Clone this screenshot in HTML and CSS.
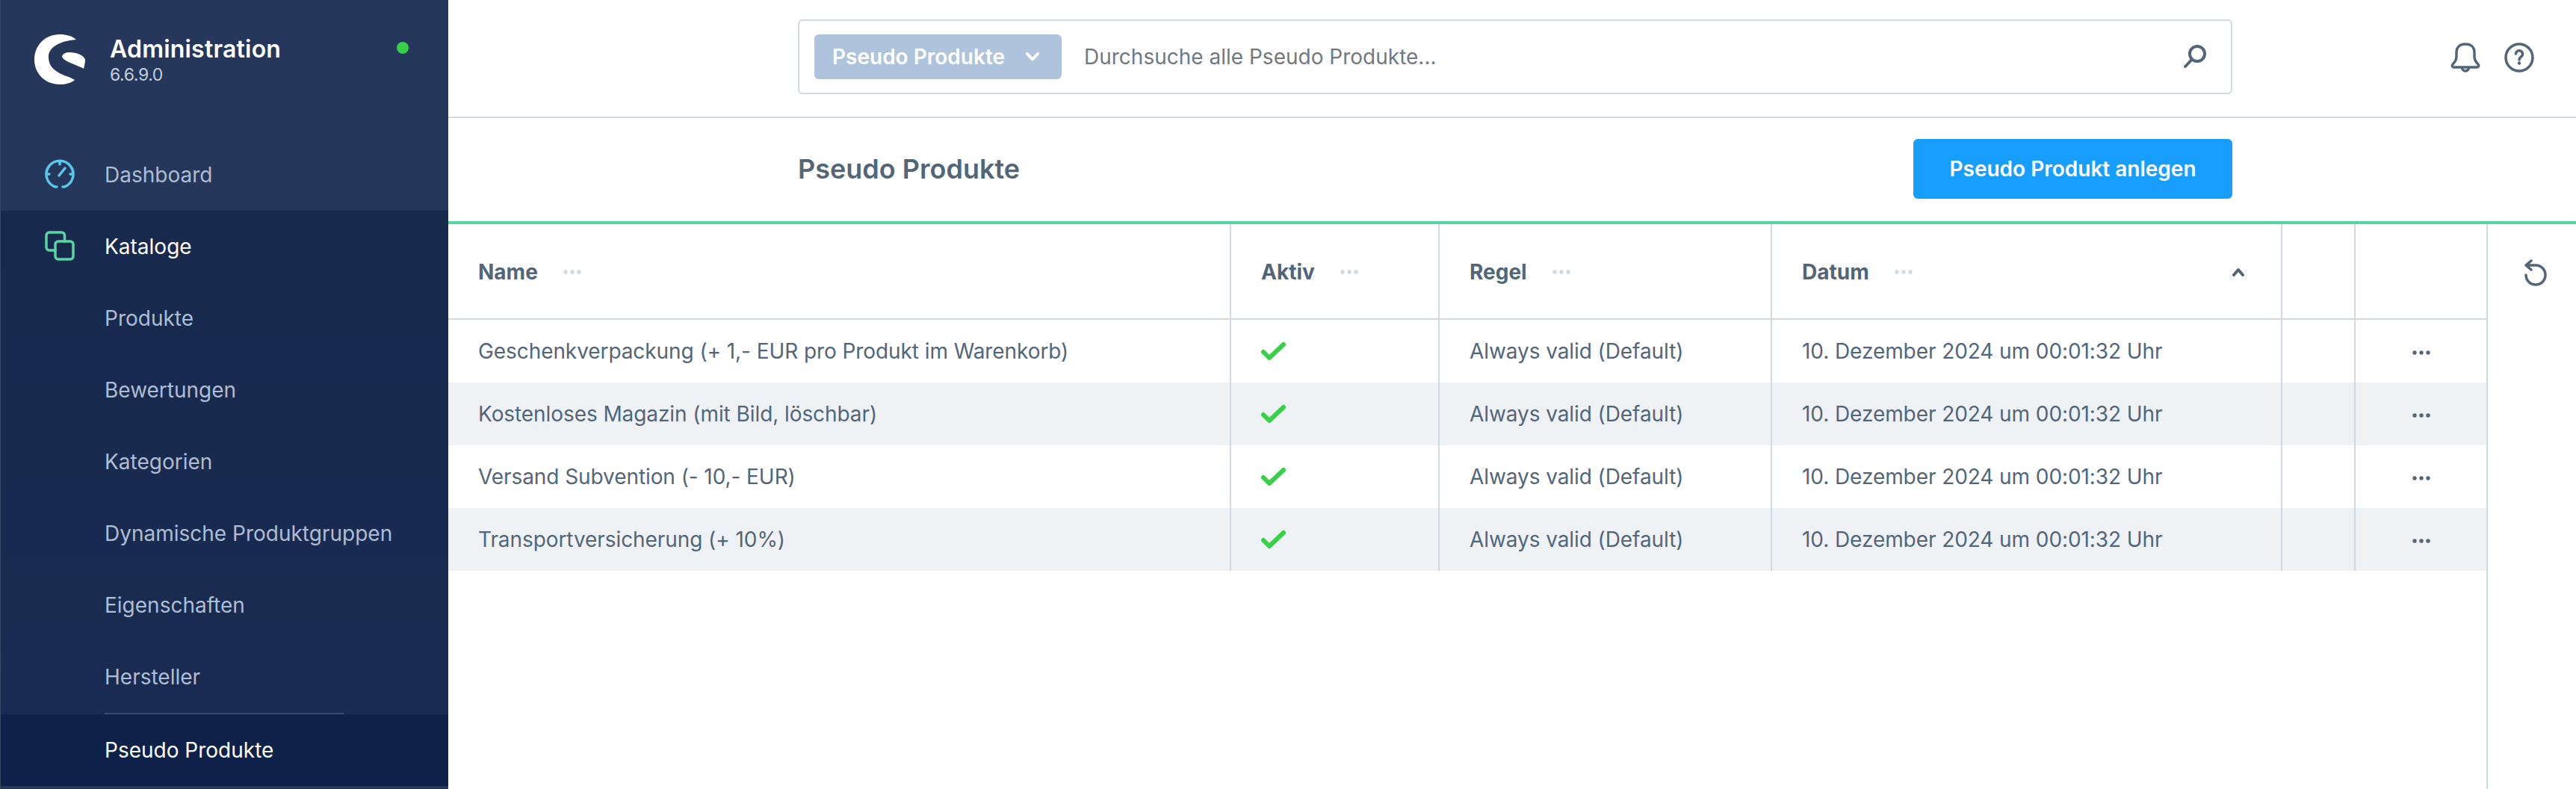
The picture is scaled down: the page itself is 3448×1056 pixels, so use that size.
FILE: index.html
```html
<!DOCTYPE html>
<html>
<head>
  <meta charset="UTF-8">
  <meta name="viewport" content="width=device-width, initial-scale=1.0">
  <title>Pseudo Produkte</title>
  <link rel="stylesheet" href="styles.css">
</head>
<body>
  <div class="app">
    <aside class="sidebar">
      <div class="brand">
        <svg class="logo" viewBox="0 0 68 68">
          <path d="M56 7C50 2 43 0 34 0C14 0 0 15 0 34C0 53 15 67 34 67C42 67 49 65 54 61C46 56 37 55 29 49C22 44 19 38 19 30C19 17 34 9 56 7Z" fill="#fff"/>
          <path d="M37 29C39 25 43 24 47 24C56 24 67 28 68 34C68 38 67 42 66 46C58 41 37 36 37 29Z" fill="#fff"/>
        </svg>
        <div class="brand-text">
          <div class="brand-name">Administration</div>
          <div class="brand-version">6.6.9.0</div>
        </div>
        <span class="status-dot"></span>
      </div>
      <nav class="nav">
        <a class="nav-item">
          <svg class="nav-icon icon-cyan" viewBox="0 0 40 40">
            <path d="M16 37H13.500A18 18 0 1 1 26.500 37H24M20 2V7M2 20H6M38 20H34M19 22L27 12"/>
          </svg>
          Dashboard
        </a>
        <div class="nav-group">
          <a class="nav-item nav-item-open">
            <svg class="nav-icon icon-green" viewBox="0 0 40 40">
              <rect x="14" y="14" width="24" height="24" rx="4"/>
              <path d="M26.500 14V6A4 4 0 0 0 22.500 2H6A4 4 0 0 0 2 6V22A4 4 0 0 0 6 26H14"/>
            </svg>
            Kataloge
          </a>
          <a class="nav-item">Produkte</a>
          <a class="nav-item">Bewertungen</a>
          <a class="nav-item">Kategorien</a>
          <a class="nav-item">Dynamische Produktgruppen</a>
          <a class="nav-item">Eigenschaften</a>
          <a class="nav-item">Hersteller</a>
          <div class="nav-divider"></div>
          <a class="nav-item nav-item-active">Pseudo Produkte</a>
        </div>
      </nav>
    </aside>

    <main class="main">
      <header class="topbar">
        <div class="search">
          <button class="search-type">
            Pseudo Produkte
            <svg class="search-chevron" viewBox="0 0 20 12"><path d="M3 2L10 9.500L17 2"/></svg>
          </button>
          <input class="search-input" type="text" placeholder="Durchsuche alle Pseudo Produkte...">
          <svg class="search-icon" viewBox="0 0 32 32">
            <circle cx="19" cy="12" r="10"/>
            <path d="M11.500 20L3 29"/>
          </svg>
        </div>
        <div class="top-actions">
          <svg class="top-icon" viewBox="0 0 40 40">
            <path d="M20 2C13 2 8 6 8 13V19C8 23 6 26 3 29C1.500 31 2.500 33 5 33H35C37.500 33 38.500 31 37 29C34 26 32 23 32 19V13C32 6 27 2 20 2ZM15.500 33A4.500 5 0 0 0 24.500 33"/>
          </svg>
          <svg class="top-icon" viewBox="0 0 40 40">
            <circle cx="20" cy="20" r="18"/>
            <path d="M15.500 15A4.500 4.500 0 1 1 22.500 19C21 20 20 21 20 23"/>
            <circle class="icon-fill" cx="20" cy="27.500" r="2.200"/>
          </svg>
        </div>
      </header>

      <div class="smartbar">
        <h1 class="page-title">Pseudo Produkte</h1>
        <button class="button">Pseudo Produkt anlegen</button>
      </div>

      <div class="content">
        <table class="grid">
          <thead>
            <tr>
              <th class="col-name"><div class="th-inner">Name <svg class="dots dots-light" viewBox="0 0 24 6"><circle cx="3" cy="3" r="2.700"/><circle cx="12" cy="3" r="2.700"/><circle cx="21" cy="3" r="2.700"/></svg></div></th>
              <th class="col-active"><div class="th-inner">Aktiv <svg class="dots dots-light" viewBox="0 0 24 6"><circle cx="3" cy="3" r="2.700"/><circle cx="12" cy="3" r="2.700"/><circle cx="21" cy="3" r="2.700"/></svg></div></th>
              <th class="col-rule"><div class="th-inner">Regel <svg class="dots dots-light" viewBox="0 0 24 6"><circle cx="3" cy="3" r="2.700"/><circle cx="12" cy="3" r="2.700"/><circle cx="21" cy="3" r="2.700"/></svg></div></th>
              <th class="col-date"><div class="th-inner">Datum <svg class="dots dots-light" viewBox="0 0 24 6"><circle cx="3" cy="3" r="2.700"/><circle cx="12" cy="3" r="2.700"/><circle cx="21" cy="3" r="2.700"/></svg>
                <svg class="sort-caret" viewBox="0 0 18 12"><path d="M3 10L9 3L15 10"/></svg></div></th>
              <th class="col-empty"></th>
              <th class="col-actions"></th>
            </tr>
          </thead>
          <tbody>
            <tr>
              <td>Geschenkverpackung (+ 1,- EUR pro Produkt im Warenkorb)</td>
              <td><svg class="check" viewBox="0 0 34 26"><path d="M3 14L11 22L30 4"/></svg></td>
              <td>Always valid (Default)</td>
              <td>10. Dezember 2024 um 00:01:32 Uhr</td>
              <td></td>
              <td class="cell-actions"><svg class="dots dots-dark" viewBox="0 0 24 6"><circle cx="3" cy="3" r="2.700"/><circle cx="12" cy="3" r="2.700"/><circle cx="21" cy="3" r="2.700"/></svg></td>
            </tr>
            <tr>
              <td>Kostenloses Magazin (mit Bild, löschbar)</td>
              <td><svg class="check" viewBox="0 0 34 26"><path d="M3 14L11 22L30 4"/></svg></td>
              <td>Always valid (Default)</td>
              <td>10. Dezember 2024 um 00:01:32 Uhr</td>
              <td></td>
              <td class="cell-actions"><svg class="dots dots-dark" viewBox="0 0 24 6"><circle cx="3" cy="3" r="2.700"/><circle cx="12" cy="3" r="2.700"/><circle cx="21" cy="3" r="2.700"/></svg></td>
            </tr>
            <tr>
              <td>Versand Subvention (- 10,- EUR)</td>
              <td><svg class="check" viewBox="0 0 34 26"><path d="M3 14L11 22L30 4"/></svg></td>
              <td>Always valid (Default)</td>
              <td>10. Dezember 2024 um 00:01:32 Uhr</td>
              <td></td>
              <td class="cell-actions"><svg class="dots dots-dark" viewBox="0 0 24 6"><circle cx="3" cy="3" r="2.700"/><circle cx="12" cy="3" r="2.700"/><circle cx="21" cy="3" r="2.700"/></svg></td>
            </tr>
            <tr>
              <td>Transportversicherung (+ 10%)</td>
              <td><svg class="check" viewBox="0 0 34 26"><path d="M3 14L11 22L30 4"/></svg></td>
              <td>Always valid (Default)</td>
              <td>10. Dezember 2024 um 00:01:32 Uhr</td>
              <td></td>
              <td class="cell-actions"><svg class="dots dots-dark" viewBox="0 0 24 6"><circle cx="3" cy="3" r="2.700"/><circle cx="12" cy="3" r="2.700"/><circle cx="21" cy="3" r="2.700"/></svg></td>
            </tr>
          </tbody>
        </table>
        <div class="grid-side">
          <svg class="reset-icon" viewBox="0 0 30 36"><path d="M9 2L2 8L9 14M2 8H15A13 13 0 1 1 2 21"/></svg>
        </div>
      </div>
    </main>
  </div>
</body>
</html>
```

FILE: styles.css
```css
* {
  box-sizing: border-box;
}
html, body {
  margin: 0;
  height: 100%;
  overflow: hidden;
}
body {
  font-family: Inter, "Noto Sans", sans-serif;
  font-size: 28px;
  color: #52667a;
  background: #fff;
}
.app {
  display: flex;
  height: 1056px;
}

/* sidebar */
.sidebar {
  width: 600px;
  flex: none;
  display: flex;
  flex-direction: column;
  background: #25375a;
  border-left: 1px solid #3a4a69;
}
.brand {
  height: 186px;
  padding: 46px 0 0 45px;
  display: flex;
  align-items: flex-start;
}
.logo {
  width: 68px;
  height: 68px;
  flex: none;
}
.brand-text {
  margin-left: 33px;
  width: 384px;
}
.brand-name {
  font-size: 32px;
  font-weight: 600;
  line-height: 40px;
  letter-spacing: 0.2px;
  color: #fff;
}
.brand-version {
  font-size: 23px;
  line-height: 28px;
  letter-spacing: -0.4px;
  color: #c4cfdc;
}
.status-dot {
  width: 16px;
  height: 16px;
  margin-top: 10px;
  border-radius: 50%;
  background: #37d046;
}
.nav-group {
  background: linear-gradient(#18294e, #1b2c52);
}
.nav-item {
  display: flex;
  align-items: center;
  height: 96px;
  padding-left: 139px;
  color: #adbdd3;
  position: relative;
}
.nav-icon {
  position: absolute;
  left: 59px;
  top: 27px;
  width: 40px;
  height: 40px;
  fill: none;
  stroke-width: 3.500;
  stroke-linecap: round;
}
.icon-cyan {
  stroke: #57c8ea;
}
.icon-green {
  stroke: #57d5a2;
}
.nav-item-open {
  color: #fff;
}
.nav-divider {
  height: 2px;
  margin-left: 139px;
  width: 320px;
  background: #3c4d6c;
}
.nav-item-active {
  color: #fff;
  background: #0e2249;
}

/* top bar */
.main {
  flex: 1;
  display: flex;
  flex-direction: column;
}
.topbar {
  height: 158px;
  flex: none;
  padding: 26px 0 0 468px;
  display: flex;
  align-items: flex-start;
  border-bottom: 2px solid #d1d9e0;
}
.search {
  width: 1920px;
  height: 100px;
  display: flex;
  align-items: center;
  padding: 0 32px 0 20px;
  border: 2px solid #d1d9e0;
  border-radius: 6px;
}
.search-type {
  width: 331px;
  height: 60px;
  flex: none;
  display: flex;
  align-items: center;
  padding: 0 0 0 24px;
  border: none;
  border-radius: 6px;
  background: #aec4dc;
  color: #fff;
  font-family: inherit;
  font-size: 28px;
  font-weight: 600;
}
.search-chevron {
  width: 20px;
  height: 12px;
  margin-left: 27px;
  fill: none;
  stroke: #fff;
  stroke-width: 4;
  stroke-linecap: round;
  stroke-linejoin: round;
}
.search-input {
  flex: 1;
  min-width: 0;
  margin-left: 30px;
  border: none;
  outline: none;
  padding: 0;
  font-family: inherit;
  font-size: 28px;
  color: #52667a;
  background: transparent;
}
.search-input::placeholder {
  color: #73787d;
  opacity: 1;
}
.search-icon {
  width: 32px;
  height: 32px;
  flex: none;
  fill: none;
  stroke: #52667a;
  stroke-width: 4;
  stroke-linecap: round;
}
.top-actions {
  margin: 31px 0 0 292px;
  display: flex;
  gap: 32px;
}
.top-icon {
  width: 40px;
  height: 40px;
  display: block;
  fill: none;
  stroke: #52667a;
  stroke-width: 3.500;
  stroke-linecap: round;
}
.top-icon .icon-fill {
  fill: #52667a;
  stroke: none;
}

/* title row */
.smartbar {
  height: 138px;
  flex: none;
  width: 2388px;
  padding: 28px 0 0 468px;
  display: flex;
  align-items: flex-start;
  justify-content: space-between;
}
.page-title {
  margin: 0;
  font-size: 36px;
  font-weight: 600;
  line-height: 80px;
  color: #52667a;
}
.button {
  width: 427px;
  height: 80px;
  border: none;
  border-radius: 6px;
  background: #189eff;
  color: #fff;
  font-family: inherit;
  font-size: 28px;
  font-weight: 600;
}

/* table */
.content {
  flex: 1;
  display: flex;
  min-height: 0;
  border-top: 4px solid #52d6a2;
}
.grid {
  width: 2728px;
  flex: none;
  align-self: flex-start;
  border-collapse: separate;
  border-spacing: 0;
  table-layout: fixed;
}
.col-name { width: 1048px; }
.col-active { width: 279px; }
.col-rule { width: 445px; }
.col-date { width: 683px; }
.col-empty { width: 98px; }
.col-actions { width: 175px; }
th, td {
  padding: 0 0 0 40px;
  text-align: left;
  border-right: 2px solid #d1d9e0;
}
th:last-child, td:last-child {
  border-right: none;
}
th {
  height: 128px;
  padding-top: 2px;
  font-weight: 700;
  border-bottom: 2px solid #d1d9e0;
}
td {
  height: 84px;
  font-weight: 400;
  letter-spacing: -0.08px;
}
tbody tr:nth-child(even) td {
  background: #eff2f5;
}
.th-inner {
  display: flex;
  align-items: center;
  padding-right: 48px;
}
.dots {
  width: 24px;
  height: 6px;
  flex: none;
}
.dots-light {
  margin-left: 34px;
  fill: #d1d9e0;
}
.dots-dark {
  display: block;
  margin: 4px auto 0;
  fill: #52667a;
}
.sort-caret {
  width: 18px;
  height: 12px;
  margin-left: auto;
  fill: none;
  stroke: #52667a;
  stroke-width: 4;
  stroke-linecap: round;
  stroke-linejoin: round;
}
.cell-actions {
  padding: 0;
}
.check {
  display: block;
  width: 34px;
  height: 26px;
  fill: none;
  stroke: #37d046;
  stroke-width: 6;
  stroke-linecap: round;
  stroke-linejoin: round;
}
.grid-side {
  flex: 1;
  border-left: 2px solid #d1d9e0;
  padding: 47px 0 0 49px;
}
.reset-icon {
  display: block;
  width: 30px;
  height: 36px;
  fill: none;
  stroke: #52667a;
  stroke-width: 3.500;
  stroke-linecap: round;
  stroke-linejoin: round;
}
```
